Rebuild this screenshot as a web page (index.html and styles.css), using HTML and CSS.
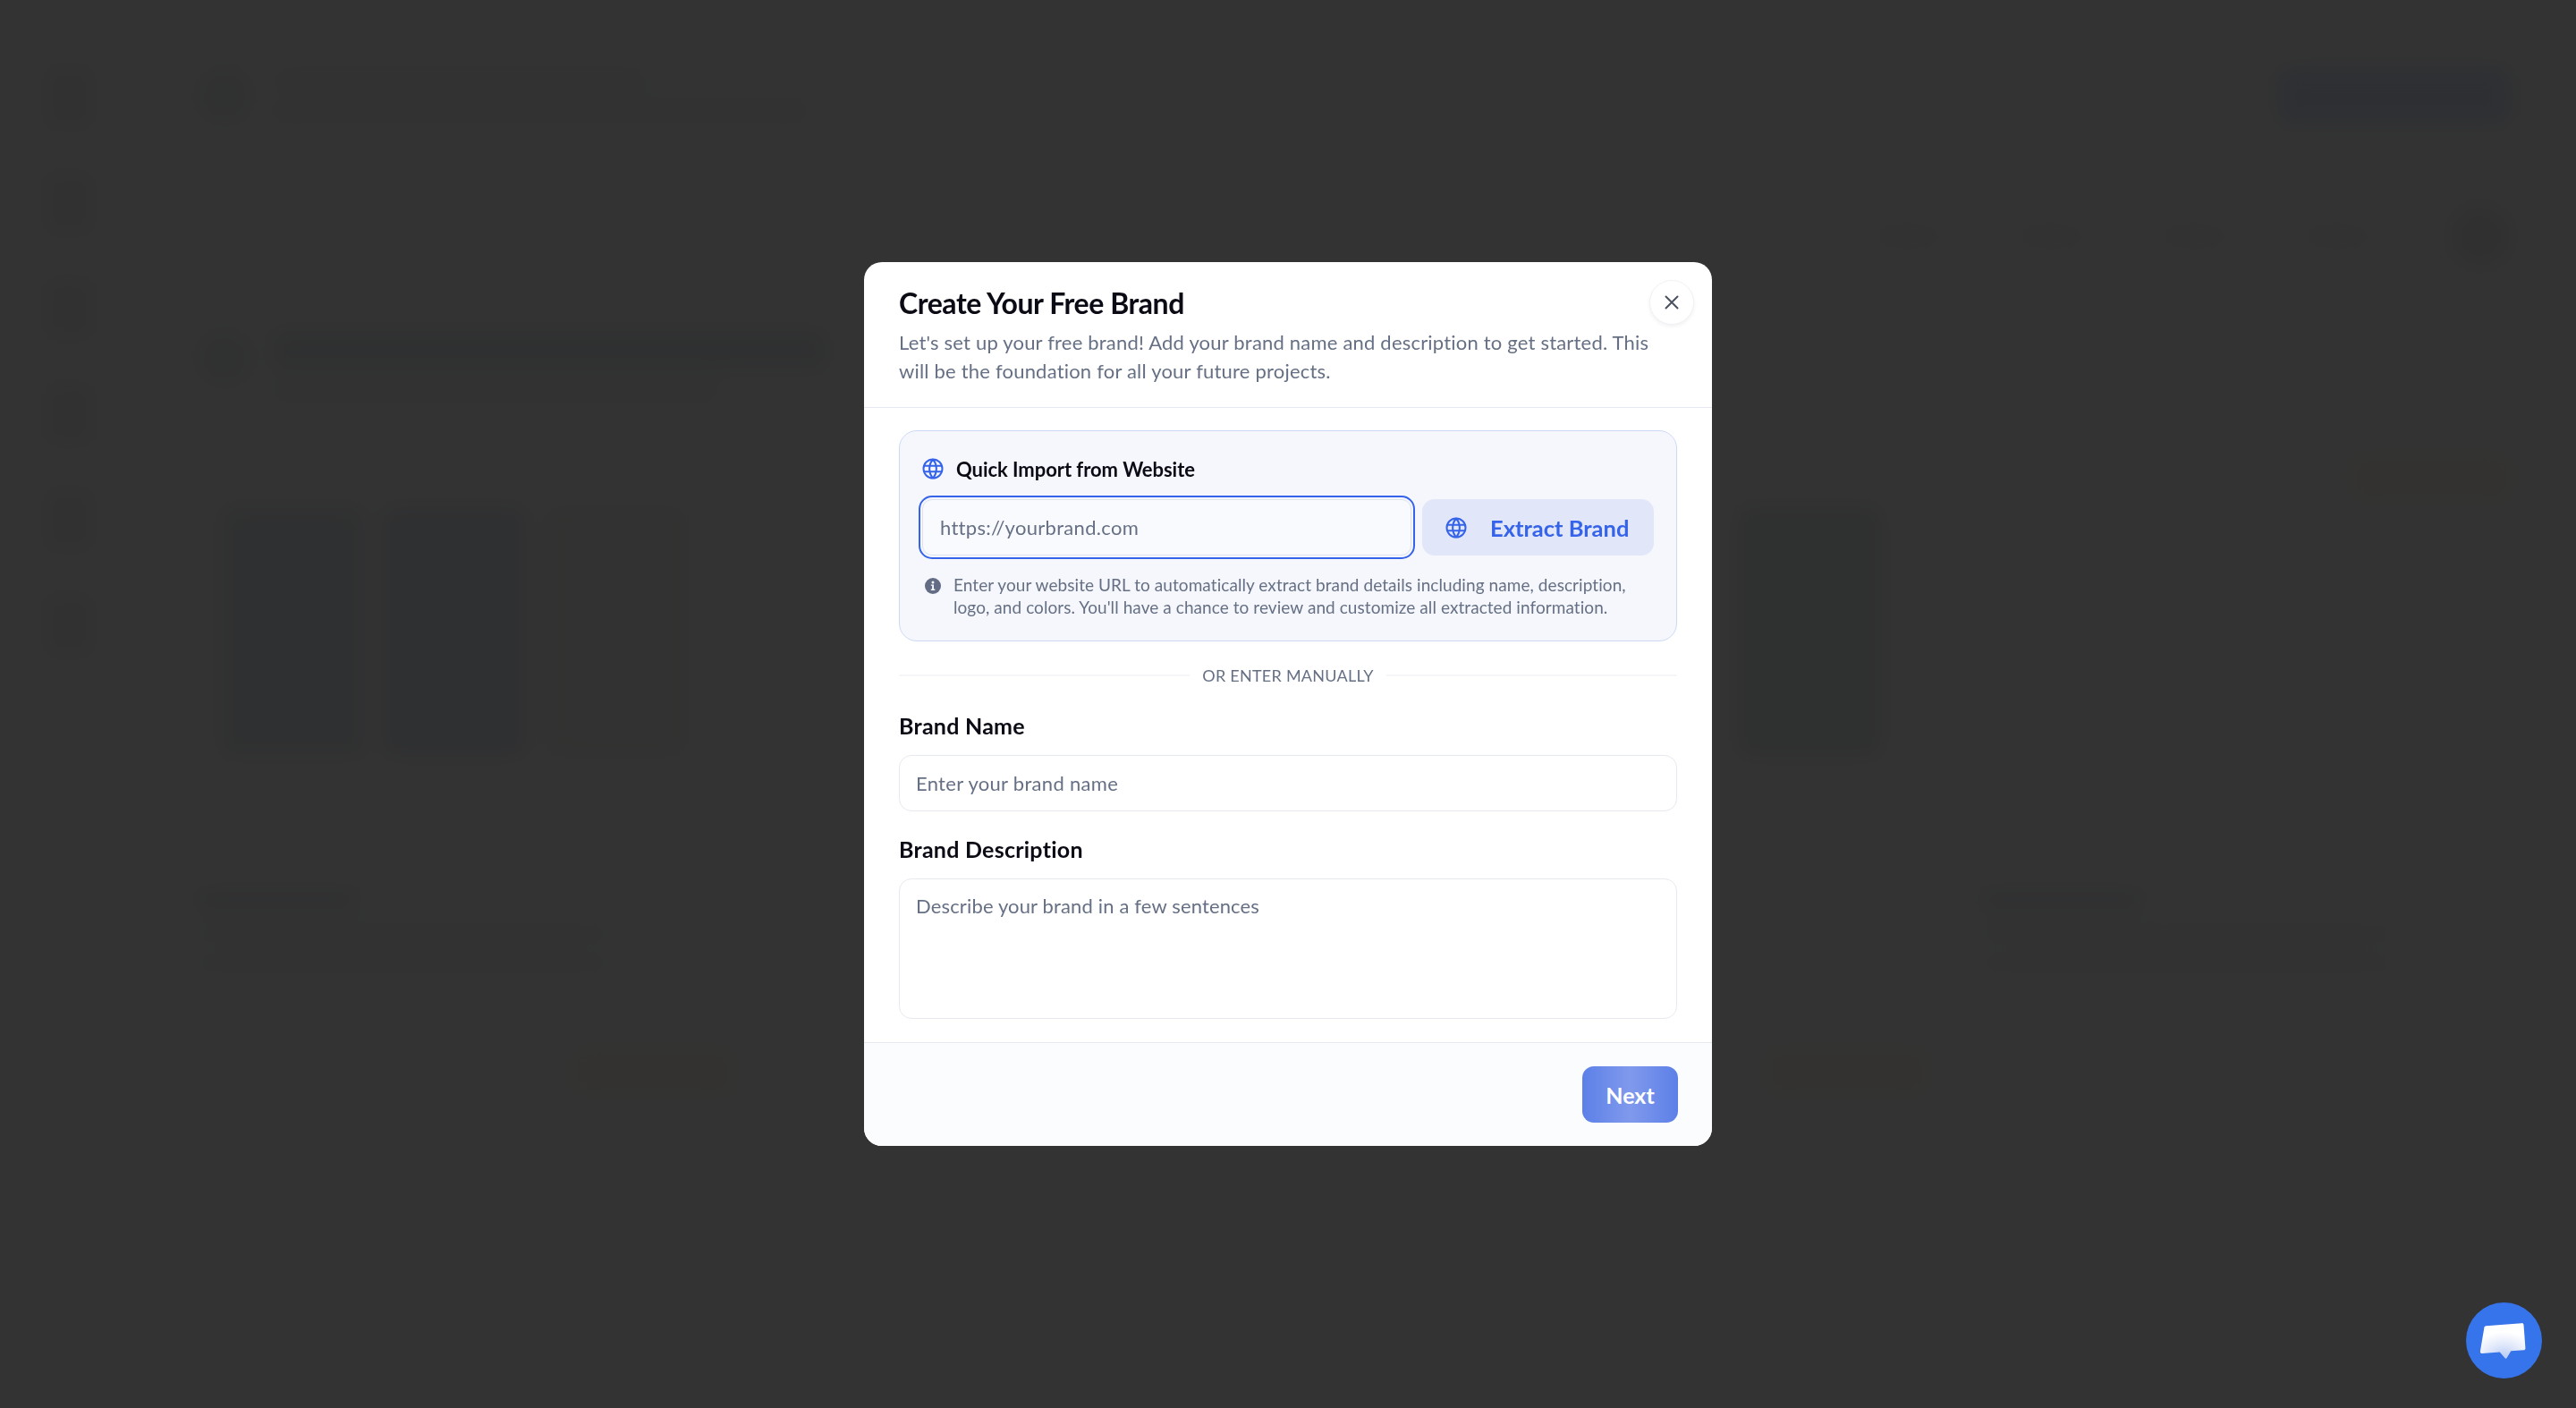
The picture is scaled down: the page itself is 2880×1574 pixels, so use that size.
FILE: index.html
```html
<!DOCTYPE html>
<html>
<head>
<meta charset="UTF-8" />
<title>Create Your Free Brand</title>
<link rel="stylesheet" href="styles.css">
</head>
<body>

<!-- page behind the dialog, only seen blurred -->
<div class="page">
  <div class="side">
    <div class="blob"></div><div class="blob"></div><div class="blob"></div>
    <div class="blob"></div><div class="blob"></div><div class="blob"></div>
  </div>
  <div class="main">
    <div class="top">
      <div class="dot"></div>
      <div class="lines">
        <div class="bar bar-a"></div>
        <div class="bar bar-b"></div>
      </div>
      <div class="cta"></div>
    </div>
    <div class="tabs">
      <div class="tab"></div><div class="tab"></div><div class="tab"></div><div class="tab"></div>
      <div class="avatar"></div>
    </div>
    <div class="hero">
      <div class="dot"></div>
      <div class="lines">
        <div class="bar bar-c"></div>
        <div class="bar bar-d"></div>
      </div>
      <div class="pill pill-hero"></div>
    </div>
    <div class="shots">
      <div class="group">
        <div class="shot"></div><div class="shot shot-dark"></div><div class="shot shot-pale"></div>
      </div>
      <div class="shot shot-far"></div>
    </div>
    <div class="rows">
      <div class="col">
        <div class="bar bar-e"></div>
        <div class="bar bar-f"></div>
        <div class="bar bar-f"></div>
        <div class="pill pill-low"></div>
      </div>
      <div class="col col-far">
        <div class="bar bar-e bar-far"></div>
        <div class="bar bar-f bar-far"></div>
        <div class="bar bar-f bar-far"></div>
        <div class="pill pill-far"></div>
      </div>
    </div>
  </div>
</div>

<div class="overlay">
  <div class="modal">
    <div class="modal-head">
      <div class="head-row">
        <h1>Create Your Free Brand</h1>
        <button class="close" type="button" aria-label="Close">
          <svg width="20" height="20" viewBox="0 0 20 20" fill="none" stroke="#4b5160" stroke-width="2" stroke-linecap="round"><path d="M3.5 3.500 16.500 16.500M16.500 3.500 3.500 16.500"/></svg>
        </button>
      </div>
      <p class="lead">Let's set up your free brand! Add your brand name and description to get started. This will be the foundation for all your future projects.</p>
    </div>

    <div class="modal-body">
      <div class="import">
        <div class="import-title">
          <svg class="globe" width="24" height="24" viewBox="0 0 24 24" fill="none" stroke="#3563e9" stroke-width="2" stroke-linecap="round" stroke-linejoin="round"><circle cx="12" cy="12" r="10.500"/><path d="M2.500 8.800h19M2.500 15.200h19M11.500 1.800a17 17 0 0 0 0 20.400M12.500 1.800a17 17 0 0 1 0 20.400"/></svg>
          <span>Quick Import from Website</span>
        </div>
        <div class="import-row">
          <input class="url" type="text" placeholder="https://yourbrand.com" />
          <button class="extract" type="button">
            <svg class="globe" width="24" height="24" viewBox="0 0 24 24" fill="none" stroke="#3563e9" stroke-width="2" stroke-linecap="round" stroke-linejoin="round"><circle cx="12" cy="12" r="10.500"/><path d="M2.500 8.800h19M2.500 15.200h19M11.500 1.800a17 17 0 0 0 0 20.400M12.500 1.800a17 17 0 0 1 0 20.400"/></svg>
            <span>Extract Brand</span>
          </button>
        </div>
        <div class="hint">
          <svg class="info" width="18" height="18" viewBox="0 0 18 18"><circle cx="9" cy="9" r="9" fill="#626c84"/><circle cx="9" cy="4.900" r="1.500" fill="#f5f7fc"/><path d="M6.800 7.400h3.200v5.200h1.300v1.400H6.800v-1.400h1.300V8.800H6.800z" fill="#f5f7fc"/></svg>
          <p>Enter your website URL to automatically extract brand details including name, description, logo, and colors. You'll have a chance to review and customize all extracted information.</p>
        </div>
      </div>

      <div class="or"><span>OR ENTER MANUALLY</span></div>

      <label class="field-label">Brand Name</label>
      <input class="field" type="text" placeholder="Enter your brand name" />

      <label class="field-label field-label-2">Brand Description</label>
      <textarea class="field field-area" placeholder="Describe your brand in a few sentences"></textarea>
    </div>

    <div class="modal-foot">
      <button class="next" type="button">Next</button>
    </div>
  </div>
</div>

<button class="chat" type="button" aria-label="Chat">
  <svg width="54" height="48" viewBox="0 0 56 50">
    <defs>
      <radialGradient id="bub" cx="0.52" cy="1" r="0.75">
        <stop offset="0" stop-color="#b4c9f4"/>
        <stop offset="0.6" stop-color="#e6ecfb"/>
        <stop offset="1" stop-color="#ffffff"/>
      </radialGradient>
    </defs>
    <path d="M6.500 7.500 48 4.300c1.300-.1 2.300.8 2.400 2l2 27c.1 1.200-.8 2.300-2 2.400l-14.800 1.100-5 8.200c-.5.700-1.400.7-2 .1l-6-7-20.500 1.500c-1.200.1-2.300-.8-2.400-2L4.400 9.900c-.1-1.200.8-2.300 2.100-2.400z" fill="url(#bub)"/>
  </svg>
</button>

</body>
</html>
```

FILE: styles.css
```css
* {
  box-sizing: border-box;
}

html, body {
  margin: 0;
  height: 100%;
  overflow: hidden;
}

body {
  font-family: "Lato", "Noto Sans", sans-serif;
  background: #fff;
  color: #0a0b14;
}

/* blurred page */
.page {
  display: flex;
  height: 100vh;
  filter: blur(11px);
}

.side {
  width: 210px;
  padding: 75px 0 0 50px;
  display: flex;
  flex-direction: column;
  gap: 50px;
}

.blob {
  width: 55px;
  height: 68px;
  border-radius: 12px;
  background: #f3f4f5;
}

.main {
  flex: 1;
  padding: 75px 72px 0 10px;
}

.top, .hero {
  display: flex;
  gap: 22px;
}

.top {
  align-items: center;
}

.hero {
  align-items: flex-start;
}

.dot {
  width: 62px;
  height: 62px;
  border-radius: 50%;
  background: #f0f3f3;
  flex: none;
}

.lines {
  flex: 1;
  display: flex;
  flex-direction: column;
  gap: 14px;
}

.bar {
  height: 16px;
  border-radius: 6px;
  background: #f4f6f7;
}

.bar-a { width: 420px; height: 20px; }
.bar-b { width: 600px; height: 24px; }
.bar-c { width: 620px; height: 44px; background: #ebeff3; }
.bar-d { width: 500px; height: 20px; }
.bar-e { width: 180px; height: 22px; background: #ebeff3; }
.bar-f { width: 460px; }
.bar-far { margin-left: 240px; }

.cta {
  width: 262px;
  height: 64px;
  border-radius: 16px;
  background: #e4ecff;
}

.tabs {
  display: flex;
  justify-content: flex-end;
  align-items: center;
  gap: 90px;
  margin-top: 90px;
}

.tab {
  width: 70px;
  height: 18px;
  border-radius: 8px;
  background: #f4f4f4;
}

.avatar {
  width: 70px;
  height: 70px;
  border-radius: 50%;
  background: #efefef;
}

.hero {
  margin-top: 70px;
}

.pill {
  width: 180px;
  height: 50px;
  border-radius: 12px;
  background: #fffaf2;
}

.pill-hero {
  margin-top: 140px;
}

.shots {
  display: flex;
  justify-content: space-between;
  margin-top: 8px;
}

.group {
  display: flex;
  gap: 20px;
  padding-left: 28px;
}

.shot {
  width: 160px;
  height: 278px;
  border-radius: 10px;
  background: #ebeff4;
}

.shot-dark { background: #e9edf4; }
.shot-pale { background: #f6f7f5; }

.shot-far {
  margin-right: 705px;
  background: #e9edee;
}

.rows {
  display: flex;
  margin-top: 150px;
}

.col {
  display: flex;
  flex-direction: column;
  gap: 18px;
  width: 1755px;
}

.col-far {
  width: auto;
}

.pill-low {
  margin-top: 70px;
  margin-left: 420px;
}

.pill-far {
  margin-top: 70px;
}

/* dialog */
.overlay {
  position: fixed;
  inset: 0;
  display: flex;
  align-items: center;
  justify-content: center;
  background: rgba(0, 0, 0, 0.8);
}

.modal {
  width: 948px;
  border-radius: 20px;
  background: #fff;
  overflow: hidden;
}

.modal-head {
  height: 163px;
  padding: 20px 20px 0 39px;
  border-bottom: 1px solid #e7e9f2;
}

.head-row {
  display: flex;
  align-items: center;
  justify-content: space-between;
}

h1 {
  margin: 0;
  font-size: 32px;
  font-weight: 700;
  letter-spacing: -0.45px;
  color: #0a0b14;
}

.close {
  width: 50px;
  height: 50px;
  padding: 0;
  display: flex;
  align-items: center;
  justify-content: center;
  border: 1px solid #f0f1f5;
  border-radius: 50%;
  background: #fff;
  box-shadow: 0 2px 4px rgba(20, 25, 50, 0.06);
}

.lead {
  margin: 4px 0 0;
  width: 860px;
  font-size: 22px;
  line-height: 32px;
  letter-spacing: 0.2px;
  color: #667085;
}

.modal-body {
  padding: 25px 39px 26px;
}

.import {
  height: 236px;
  padding: 30px 25px 0;
  border: 1px solid #ccd9f5;
  border-radius: 20px;
  background: #f5f7fc;
}

.import-title {
  display: flex;
  align-items: center;
  gap: 14px;
  height: 24px;
  font-size: 22px;
  font-weight: 700;
  letter-spacing: -0.05px;
}

.globe {
  flex: none;
}

.import-row {
  display: flex;
  gap: 12px;
  margin-top: 22px;
}

.url {
  flex: 1;
  min-width: 0;
  height: 63px;
  padding: 0 19px;
  font: inherit;
  font-size: 22px;
  letter-spacing: 0.3px;
  border: 1px solid #dfe3ee;
  border-radius: 11px;
  background: #f9fafe;
  outline: 2px solid #3563e9;
  outline-offset: 2px;
}

.url::placeholder, .field::placeholder {
  color: #667085;
  opacity: 1;
}

.extract {
  display: flex;
  align-items: center;
  gap: 26px;
  width: 259px;
  height: 63px;
  padding: 0 0 0 26px;
  border: 0;
  border-radius: 14px;
  background: #e1e7f8;
  font: inherit;
  font-size: 25.5px;
  font-weight: 700;
  color: #3563e9;
  white-space: nowrap;
}

.hint {
  display: flex;
  gap: 14px;
  margin-top: 20px;
  padding-left: 3px;
  color: #667085;
}

.info {
  flex: none;
  margin-top: 5px;
}

.hint p {
  margin: 0;
  font-size: 19px;
  line-height: 25px;
  letter-spacing: 0.07px;
}

.or {
  display: flex;
  align-items: center;
  gap: 14px;
  margin-top: 26px;
  height: 24px;
  font-size: 18px;
  letter-spacing: 0.25px;
  color: #667085;
  white-space: nowrap;
}

.or::before, .or::after {
  content: "";
  flex: 1;
  height: 2px;
  background: #f5f6f9;
}

.field-label {
  display: block;
  margin-top: 28px;
  height: 32px;
  font-size: 25px;
  line-height: 32px;
  font-weight: 700;
  letter-spacing: 0.25px;
}

.field-label-2 {
  margin-top: 26px;
}

.field {
  display: block;
  width: 100%;
  height: 63px;
  margin-top: 17px;
  padding: 0 18px;
  font: inherit;
  font-size: 22px;
  letter-spacing: 0.3px;
  border: 1px solid #e7e9f0;
  border-radius: 14px;
  background: #fff;
  outline: none;
}

.field-area {
  height: 157px;
  padding-top: 16px;
  resize: none;
  line-height: 28px;
  letter-spacing: 0.15px;
}

.modal-foot {
  display: flex;
  justify-content: flex-end;
  height: 116px;
  padding: 26px 38px 0 0;
  border-top: 1px solid #e7e9f2;
  background: #fbfcfe;
}

.next {
  width: 107px;
  height: 63px;
  border: 0;
  border-radius: 13px;
  background: linear-gradient(90deg, #5c80e8 0%, #8099ec 50%, #5c80e8 100%);
  font: inherit;
  font-size: 25px;
  font-weight: 700;
  color: #fff;
}

.chat {
  position: fixed;
  right: 38px;
  bottom: 33px;
  width: 85px;
  height: 85px;
  padding: 0;
  display: flex;
  align-items: center;
  justify-content: center;
  border: 0;
  border-radius: 50%;
  background: #3574ea;
}
```
